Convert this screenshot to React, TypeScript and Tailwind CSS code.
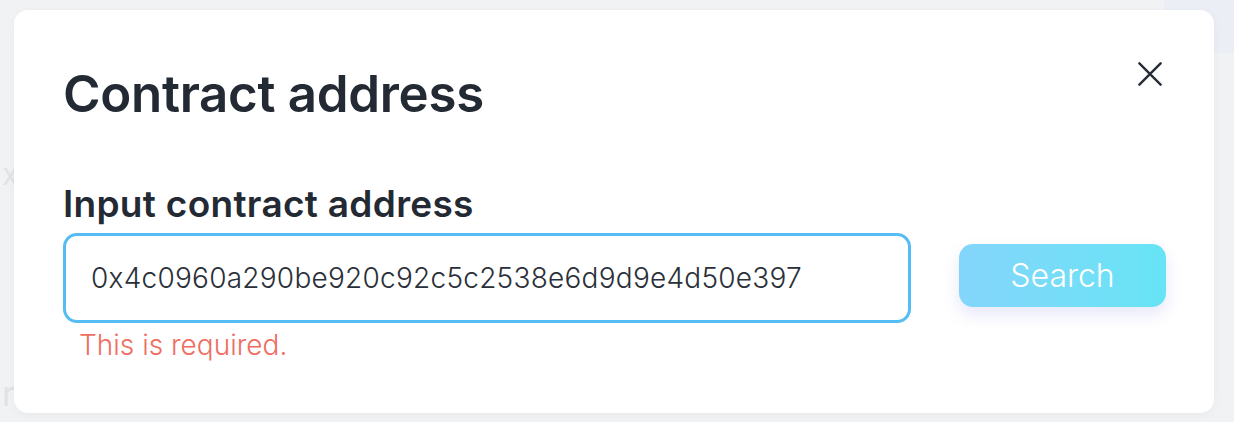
import React from "react";

export default function App() {
  return (
    <div
      className="relative w-[1234px] h-[422px] overflow-hidden bg-[#f1f2f3]"
      style={{ fontFamily: "Inter, 'Noto Sans', sans-serif" }}
    >
      <div className="absolute right-0 top-0 w-[70px] h-[53px] bg-[#eceef6]" />
      <div className="absolute left-[2px] top-[152px] text-[30px] text-[#e2e3e5]">x</div>
      <div className="absolute left-[2px] top-[368px] text-[34px] text-[#e2e3e5]">r</div>
      <div className="relative ml-[14px] mt-[10px] w-[1200px] h-[403px] rounded-[14px] bg-white shadow-[0_2px_10px_rgba(0,0,0,0.04)] pl-[49px] pr-[48px] pt-[56px]">
        <div className="flex items-start justify-between">
          <h1 className="text-[51px] leading-[56px] font-semibold text-[#232a33] tracking-[-0.3px]">
            Contract address
          </h1>
          <button className="mt-[-4px] mr-[4px] w-[24px] h-[24px] flex items-center justify-center text-[#262d36]">
            <svg width="26" height="26" viewBox="0 0 26 26" fill="none">
              <path d="M1.5 1.5L24.5 24.5M24.5 1.5L1.5 24.5" stroke="currentColor" strokeWidth="2.6" strokeLinecap="round" />
            </svg>
          </button>
        </div>
        <div className="mt-[60px] text-[37px] leading-[44px] font-semibold text-[#232a33] tracking-[0.3px]">
          Input contract address
        </div>
        <div className="mt-[7px] flex items-start">
          <div className="flex flex-col">
            <div className="w-[848px] h-[90px] rounded-[14px] border-[3px] border-[#55bdf3] flex items-center pl-[25px]">
              <span className="text-[28px] font-light text-[#2a3039] tracking-[0.25px]">
                0x4c0960a290be920c92c5c2538e6d9d9e4d50e397
              </span>
            </div>
            <div className="mt-[5px] ml-[16px] text-[28px] leading-[34px] font-light text-[#ee6e62]">
              This is required.
            </div>
          </div>
          <button className="ml-[48px] mt-[11px] w-[208px] h-[63px] rounded-[14px] bg-gradient-to-r from-[#84d5fb] to-[#66e4f5] text-white text-[32px] font-light shadow-[0_8px_16px_rgba(120,130,220,0.18)]">
            Search
          </button>
        </div>
      </div>
    </div>
  );
}
